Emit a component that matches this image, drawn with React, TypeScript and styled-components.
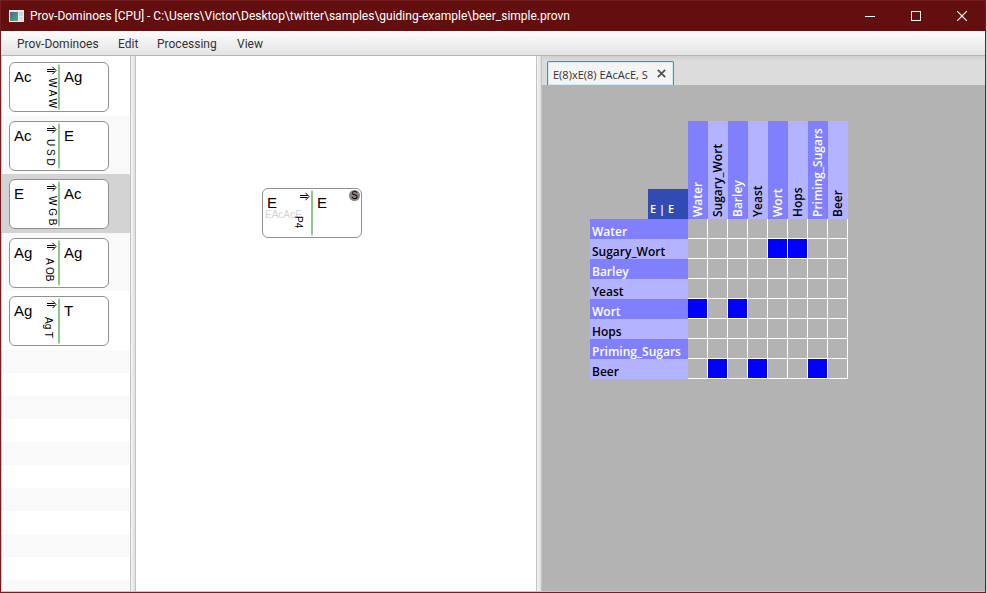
import React from 'react';
import styled, { createGlobalStyle, css } from 'styled-components';

const GlobalStyle = createGlobalStyle`
  * { box-sizing: border-box; }
  html, body { margin: 0; background: #d8d2d2; }
  body { font-family: "Open Sans", "Segoe UI", sans-serif; font-size: 12px; color: #323232; overflow: hidden; }
  button { font: inherit; color: inherit; border: 0; padding: 0; margin: 0; background: none; }
`;

const Window = styled.div`
  display: flex;
  flex-direction: column;
  height: 100vh;
  margin-right: 1px;
  border: 1px solid #741d1f;
`;

const TitleBar = styled.header`
  display: flex;
  align-items: center;
  flex: 0 0 30px;
  padding-left: 8px;
  background: #640f0f;
  color: #fff;
`;

const Title = styled.h1`
  flex: 1;
  margin: 0 0 0 6px;
  font-family: Roboto, "Segoe UI", sans-serif;
  font-size: 12px;
  line-height: 16px;
  font-weight: 400;
  white-space: nowrap;
`;

const WindowButton = styled.button`
  display: flex;
  align-items: center;
  justify-content: center;
  width: 46px;
  height: 30px;
`;

const MenuBar = styled.nav`
  display: flex;
  align-items: center;
  flex: 0 0 25px;
  padding: 2px 0 0 7px;
  background: linear-gradient(#fdfdfd, #e3e3e3);
  border-bottom: 1px solid #b5b5b5;
  font-family: Roboto, "Segoe UI", sans-serif;
`;

const MenuButton = styled.button<{ $width: number }>`
  width: ${(p) => p.$width}px;
  padding-left: 9px;
  line-height: 18px;
  text-align: left;
  white-space: nowrap;
`;

const Panes = styled.main`
  display: flex;
  flex: 1;
  min-height: 0;
  border-left: 1px solid #c8c8c8;
  border-bottom: 1px solid #c8c8c8;
`;

const Sidebar = styled.ul`
  flex: 0 0 128px;
  margin: 0;
  padding: 1px 0 0;
  list-style: none;
  overflow: hidden;
  background: repeating-linear-gradient(#f9f9f9 0 23px, #fff 23px 46px) 0 294px / 100% 460px no-repeat #fff;
`;

const ListRow = styled.li<{ $selected: boolean }>`
  height: 59px;
  padding: 5px 7px 0;
  background: ${(p) => (p.$selected ? '#d3d3d3' : '#fff')};
  &:nth-child(even) {
    height: 58px;
    background: #f9f9f9;
  }
`;

const Divider = styled.div`
  flex: 0 0 6px;
  background: linear-gradient(90deg, #f5f5f5, #dedede);
  border: solid #c4c4c4;
  border-width: 0 1px;
`;

const Canvas = styled.section`
  position: relative;
  flex: 0 0 400px;
  background: #fff;
`;

const PlacedDomino = styled.div`
  position: absolute;
  left: 126px;
  top: 132px;
`;

const Piece = styled.div`
  display: grid;
  grid-template-columns: 36px 12px 2px 1fr;
  width: 100px;
  height: 50px;
  position: relative;
  border: 1px solid #909090;
  border-radius: 6px;
  background: #fff;
  color: #000;
  font-family: "Liberation Sans", Arial, sans-serif;
`;

const Half = styled.span`
  padding: 5px 0 0 4px;
  font-size: 15px;
  line-height: 18px;
`;

const Spine = styled.span`
  height: 46px;
  margin-top: 1px;
  border-radius: 50%/4px;
  background: #8ec68c;
`;

const Relation = styled.span`
  padding: 3px 0 0 1px;
  line-height: 9px;
`;

const VerticalText = styled.span<{ $left: number; $top: number }>`
  position: absolute;
  left: ${(p) => p.$left}px;
  top: ${(p) => p.$top}px;
  writing-mode: vertical-rl;
  font-size: 10px;
  line-height: 12px;
  white-space: nowrap;
`;

const Caption = styled.span`
  position: absolute;
  left: 2px;
  top: 20px;
  font-size: 10px;
  line-height: 12px;
  color: #d3d3d3;
`;

const Badge = styled.span`
  position: absolute;
  right: 1px;
  top: 1px;
  width: 11px;
  height: 11px;
  border-radius: 50%;
  background: #858585;
  font-size: 10px;
  line-height: 11px;
  text-align: center;
`;

const Viewer = styled.section`
  display: flex;
  flex-direction: column;
  flex: 1;
  min-width: 0;
  background: #b3b3b3;
`;

const TabStrip = styled.div`
  display: flex;
  align-items: flex-end;
  flex: 0 0 29px;
  padding-left: 5px;
  background: linear-gradient(#cfcfcf, #dcdcdc 5px);
`;

const Tab = styled.div`
  display: flex;
  align-items: center;
  width: 127px;
  height: 24px;
  padding: 0 5px;
  background: #f4f4f4;
  border: 1px solid #1e9fcc;
  border-bottom: 0;
  border-radius: 2px 2px 0 0;
  box-shadow: inset 0 0 0 1px #cfeaf4;
`;

const TabLabel = styled.button`
  flex: 1;
  padding-top: 2px;
  text-align: left;
  font-size: 11px;
  line-height: 18px;
  white-space: nowrap;
`;

const TabClose = styled.button`
  display: flex;
  margin-right: 2px;
`;

const Matrix = styled.table`
  width: max-content;
  margin: 36px 0 0 48px;
  border-collapse: separate;
  border-spacing: 0;
  font-size: 12px;
  th, td { padding: 0; font-weight: 600; }
`;

const Corner = styled.th`
  width: 98px;
  height: 98px;
  vertical-align: bottom;
`;

const CornerLabel = styled.div`
  width: 40px;
  height: 30px;
  margin-left: auto;
  padding: 12px 0 0 2px;
  background: #324bb4;
  color: #fff;
  font-size: 11px;
  line-height: 16px;
  text-align: left;
`;

const shade = css<{ $dark: boolean }>`
  background: ${(p) => (p.$dark ? '#8080ff' : '#b3b3ff')};
  color: ${(p) => (p.$dark ? '#fff' : '#000')};
`;

const ColumnHead = styled.th<{ $dark: boolean }>`
  ${shade}
  width: 20px;
  height: 98px;
`;

const ColumnText = styled.div`
  width: 20px;
  height: 98px;
  padding-top: 2px;
  writing-mode: vertical-rl;
  transform: rotate(180deg);
  text-align: left;
  line-height: 20px;
  white-space: nowrap;
`;

const RowHead = styled.th<{ $dark: boolean }>`
  ${shade}
  height: 20px;
  && { padding: 4px 0 0 2px; }
  line-height: 16px;
  text-align: left;
`;

const RowText = styled.div`
  height: 16px;
  line-height: 18px;
`;

const Cell = styled.td<{ $filled: boolean }>`
  width: 20px;
  height: 20px;
  background: ${(p) => (p.$filled ? '#0000ff' : '#b3b3b3')};
  border: solid #fff;
  border-width: 0 1px 1px 0;
`;

const ArrowIcon = styled.svg`
  display: block;
`;

const Arrow = () => (
  <ArrowIcon width="10" height="9" viewBox="0 0 10 9" fill="none" stroke="#000" aria-hidden="true">
    <path d="M0 3.5h7.5M0 5.5h7.5M5.5 .8 9 4.5 5.5 8.2" />
  </ArrowIcon>
);

interface DominoProps {
  left: string;
  right: string;
  relation: string;
  x: number;
  y: number;
  caption?: string;
  badge?: string;
}

const Domino = ({ left, right, relation, x, y, caption, badge }: DominoProps) => (
  <Piece>
    <Half>{left}</Half>
    <Relation><Arrow /></Relation>
    <Spine />
    <Half>{right}</Half>
    {caption && <Caption>{caption}</Caption>}
    <VerticalText $left={x} $top={y}>{relation}</VerticalText>
    {badge && <Badge>{badge}</Badge>}
  </Piece>
);

const dominoes: DominoProps[] = [
  { left: 'Ac', right: 'Ag', relation: 'W A W', x: 36, y: 15 },
  { left: 'Ac', right: 'E', relation: 'U S D', x: 34, y: 17 },
  { left: 'E', right: 'Ac', relation: 'W G B', x: 36, y: 16 },
  { left: 'Ag', right: 'Ag', relation: 'A OB', x: 33, y: 19 },
  { left: 'Ag', right: 'T', relation: 'Ag T', x: 32, y: 20 },
];

const menus: [string, number][] = [['Prov-Dominoes', 101], ['Edit', 39], ['Processing', 80], ['View', 50]];

const names = ['Water', 'Sugary_Wort', 'Barley', 'Yeast', 'Wort', 'Hops', 'Priming_Sugars', 'Beer'];
const filled: Record<number, number[]> = { 1: [4, 5], 4: [0, 2], 7: [1, 3, 6] };

export default function App() {
  return (
    <>
      <GlobalStyle />
      <Window>
        <TitleBar>
          <svg width="15" height="12" viewBox="0 0 15 12" aria-hidden="true">
            <defs>
              <linearGradient id="pane" x1="0" y1="0" x2="1" y2="1">
                <stop offset="0" stopColor="#3c6b96" />
                <stop offset="1" stopColor="#58a978" />
              </linearGradient>
            </defs>
            <rect width="15" height="12" fill="#e9e9e9" />
            <rect x="1" y="2" width="8" height="9" fill="url(#pane)" />
            <rect x="10" y="2" width="4" height="4" fill="#cbd3d8" />
            <rect x="10" y="7" width="4" height="4" fill="#d8dcde" />
          </svg>
          <Title>Prov-Dominoes [CPU] - C:\Users\Victor\Desktop\twitter\samples\guiding-example\beer_simple.provn</Title>
          <WindowButton aria-label="Minimize">
            <svg width="10" height="10" stroke="#fff"><path d="M0 5.5h10" /></svg>
          </WindowButton>
          <WindowButton aria-label="Maximize">
            <svg width="10" height="10" stroke="#fff" fill="none"><rect x=".5" y=".5" width="9" height="9" /></svg>
          </WindowButton>
          <WindowButton aria-label="Close">
            <svg width="10" height="10" stroke="#fff" strokeWidth="1.2"><path d="M0 0 10 10M10 0 0 10" /></svg>
          </WindowButton>
        </TitleBar>
        <MenuBar aria-label="Main menu">
          {menus.map(([label, width]) => (
            <MenuButton key={label} $width={width}>{label}</MenuButton>
          ))}
        </MenuBar>
        <Panes>
          <Sidebar>
            {dominoes.map((d, i) => (
              <ListRow key={d.relation} $selected={i === 2}><Domino {...d} /></ListRow>
            ))}
          </Sidebar>
          <Divider />
          <Canvas>
            <PlacedDomino>
              <Domino left="E" right="E" relation="P4" x={29} y={27} caption="EAcAcE" badge="S" />
            </PlacedDomino>
          </Canvas>
          <Divider />
          <Viewer>
            <TabStrip role="tablist">
              <Tab>
                <TabLabel role="tab" aria-selected="true">E(8)xE(8) EAcAcE, S</TabLabel>
                <TabClose aria-label="Close tab">
                  <svg width="9" height="9" stroke="#505050" strokeWidth="1.7"><path d="M.8 .8 8.2 8.2M8.2 .8 .8 8.2" /></svg>
                </TabClose>
              </Tab>
            </TabStrip>
            <Matrix>
              <thead>
                <tr>
                  <Corner><CornerLabel>E | E</CornerLabel></Corner>
                  {names.map((n, i) => (
                    <ColumnHead key={n} scope="col" $dark={i % 2 === 0}><ColumnText>{n}</ColumnText></ColumnHead>
                  ))}
                </tr>
              </thead>
              <tbody>
                {names.map((n, r) => (
                  <tr key={n}>
                    <RowHead scope="row" $dark={r % 2 === 0}><RowText>{n}</RowText></RowHead>
                    {names.map((c, i) => (
                      <Cell key={c} $filled={!!filled[r]?.includes(i)} />
                    ))}
                  </tr>
                ))}
              </tbody>
            </Matrix>
          </Viewer>
        </Panes>
      </Window>
    </>
  );
}
